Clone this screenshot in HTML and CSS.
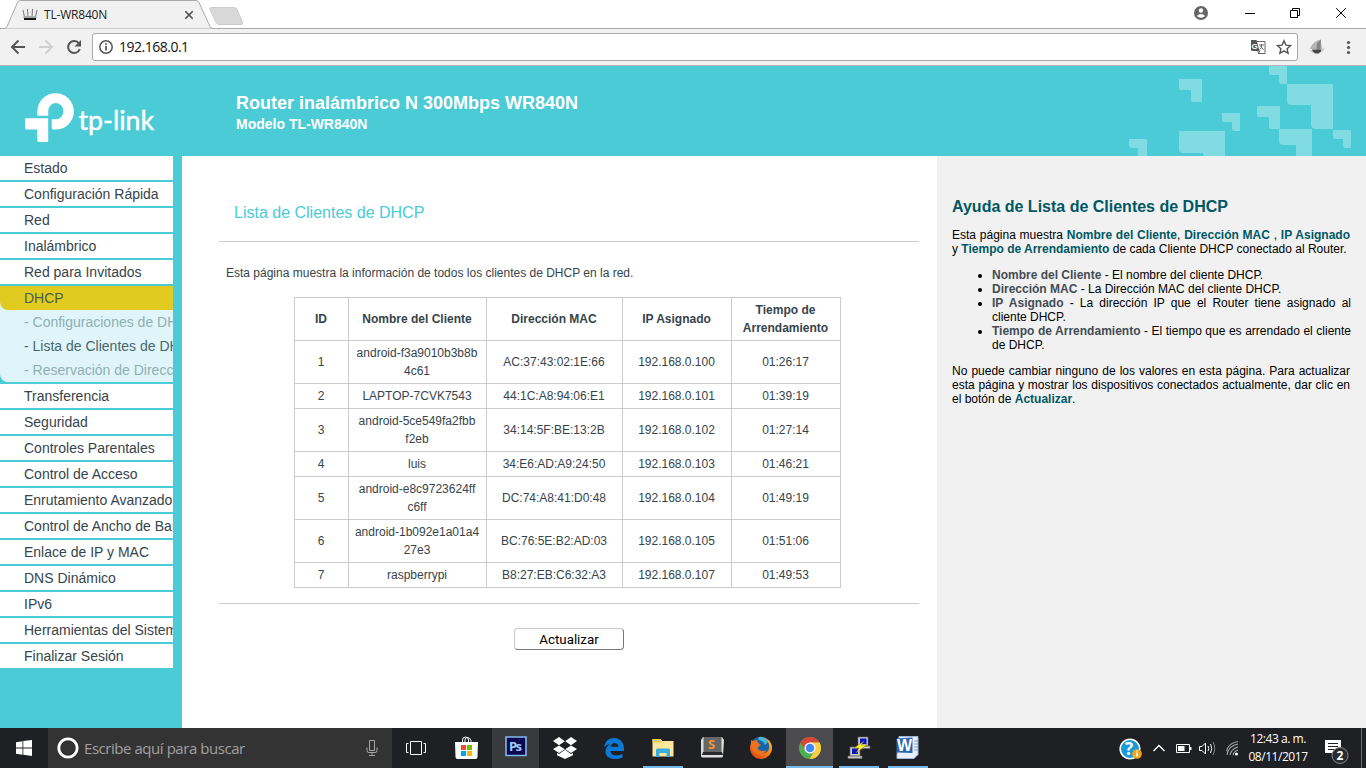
FILE: index.html
```html
<!DOCTYPE html>
<html lang="es">
<head>
<meta charset="utf-8">
<title>TL-WR840N</title>
<link rel="stylesheet" href="styles.css">
</head>
<body>
<div class="screen">
  <div class="tabstrip">
    <svg class="tab-shape" width="250" height="29" viewBox="0 0 250 29">
      <path d="M0 29V28.5H4Q6 28.5 7 26.500L17.500 2.500Q18.500 .5 20.500 .5H196Q198 .5 199 2.500L210 26.500Q211 28.500 213 28.500H250V29Z" fill="#f1f1f1" stroke="#a9a9a9"/>
      <path d="M212 7.500H234Q236 7.500 237 9.500L242.500 22Q243.500 24.500 241 24.500H219Q217 24.500 216 22.500L210 9.500Q209 7.500 212 7.500Z" fill="#d8d8d8" stroke="#cbcbcb"/>
    </svg>
    <div class="tab">
      <svg width="16" height="16" viewBox="0 0 16 16"><path fill="#eee" d="M0 0h16v16H0z"/><path d="M1 3l1.500 7M5.500 2l.5 8M10.500 2l-.5 8M15 3l-1.500 7" stroke="#777" fill="none"/><path d="M2 9h12l1 2H1z" fill="#aaa"/><path d="M2 11h12v2H2z" fill="#151515"/></svg>
      <span class="tab-title">TL-WR840N</span>
      <svg class="tab-close" width="10" height="10" viewBox="0 0 10 10"><path d="M1.300 1.300l7.400 7.400M8.700 1.300L1.300 8.700" stroke="#4d4d4d" stroke-width="1.600"/></svg>
    </div>
    <svg class="window-buttons" width="176" height="28" viewBox="0 0 176 28">
      <circle cx="11" cy="13" r="7" fill="#666"/><circle cx="11" cy="10.500" r="2.200" fill="#fff"/><path d="M6.800 16Q11 12 15.200 16Q11 19.500 6.800 16Z" fill="#fff"/>
      <path d="M55 13.500h10M100.500 10.500h7v7h-7zM102.500 10V8.500h7v7H108M146.200 8.200l9.600 9.600M155.800 8.200l-9.600 9.600" fill="none" stroke="#000"/>
    </svg>
  </div>
  <div class="toolbar">
    <svg width="92" height="36" viewBox="0 0 92 36">
      <path d="M25 18H12.500M18.500 11.500L12 18l6.500 6.500" fill="none" stroke="#555" stroke-width="2"/>
      <path d="M39 18h12.500M45.500 11.500L52 18l-6.500 6.500" fill="none" stroke="#d0d0d0" stroke-width="2"/>
      <path d="M79 14.500A6 6 0 1 0 79.800 20" fill="none" stroke="#555" stroke-width="2"/><path d="M81 11v6.500h-6.500z" fill="#555"/>
    </svg>
    <div class="omnibox">
      <svg width="14" height="14" viewBox="0 0 14 14"><circle cx="7" cy="7" r="6.200" fill="none" stroke="#555" stroke-width="1.500"/><path d="M6.200 6h1.700v4.500H6.200zM6.200 3.300h1.700v1.600H6.200z" fill="#555"/></svg>
      <span class="url">192.168.0.1</span>
      <svg class="omni-icons" width="44" height="20" viewBox="0 0 44 20">
        <path d="M7.500 4.500h8.500v12H9.500z" fill="#fff" stroke="#666"/><path d="M2 3h5.500l3 11H3.500Q2 14 2 12.500z" fill="#555"/><text x="2.600" y="11.500" class="g-mark">G</text><path d="M10 8h5M12.500 7v1q1 3-2 4.500M11.500 9l3 4M9.500 16.500l1.500-3" fill="none" stroke="#666"/>
        <path d="M35 3.800l1.900 4.300 4.700.5-3.500 3.100 1 4.600-4.100-2.400-4.100 2.400 1-4.600-3.500-3.100 4.700-.5z" fill="none" stroke="#555" stroke-width="1.400"/>
      </svg>
    </div>
    <svg class="extensions" width="68" height="36" viewBox="0 0 68 36">
      <path d="M13 17.500Q16 12 22.500 10.500L24 20H12z" fill="#b5b5b5"/><path d="M19 14l4-3.500-.5 10h-4z" fill="#858585"/><path d="M11 20.500q8 3 16-2-2 5-8 7-5-.5-8-5z" fill="#ccc"/><path d="M14 20.500h9q1 2-3 4-5 0-6-4z" fill="#444"/>
      <g fill="#555"><circle cx="50.500" cy="13.500" r="1.600"/><circle cx="50.500" cy="18.500" r="1.600"/><circle cx="50.500" cy="23.500" r="1.600"/></g>
    </svg>
  </div>

  <header class="banner">
    <svg class="brand" width="182" height="90" viewBox="0 0 182 90">
      <path d="M37.300 49.700V45.400A18.300 18.200 0 1 1 55.600 63.600H53.500Q51.700 63.600 51.700 61.800V53.300H55.800A7.600 8.200 0 1 0 48.300 45V49.700Z" fill="#fff"/>
      <path d="M25 52.300H48.200V76H39Q37.300 76 37.300 74.300V63.600H27Q25 63.600 25 61.600Z" fill="#fff"/>
      <text class="brand-name" x="78.500" y="64" textLength="75.500" lengthAdjust="spacingAndGlyphs">tp-link</text>
    </svg>
    <div class="titles"><h1>Router inalámbrico N 300Mbps WR840N</h1><h2>Modelo TL-WR840N</h2></div>
    <svg class="tiles" width="256" height="90" viewBox="0 0 256 90" fill="#81dbe2">
      <path d="M69 13h23v23h-9q-2 0-2-2v-10h-10q-2 0-2-2z"/>
      <path d="M159 0h18v18h-6q-2 0-2-2v-7h-8q-2 0-2-2z"/>
      <path d="M177 18h46v45h-17q-5 0-5-5v-19h-20q-4 0-4-4z"/>
      <path d="M147 40h23v23h-9q-2 0-2-2v-10h-10q-2 0-2-2z"/>
      <path d="M112 47h18v18h-6q-2 0-2-2v-7h-8q-2 0-2-2z"/>
      <path d="M169 63h33v27h-16v-11h-13q-4 0-4-4z"/>
      <path d="M223 64h18v18h-6q-2 0-2-2v-7h-8q-2 0-2-2z"/>
      <path d="M69 65h46v25h-20q-2 0-2-3h-20q-4 0-4-4z"/>
      <path d="M19 73h18v17h-9v-8h-7q-2 0-2-2z"/>
    </svg>
  </header>

  <div class="content">
    <nav class="menu">
      <a>Estado</a><a>Configuración Rápida</a><a>Red</a><a>Inalámbrico</a><a>Red para Invitados</a>
      <div class="menu-group">
        <a class="selected">DHCP</a>
        <a class="sub">- Configuraciones de DHCP</a><a class="sub current">- Lista de Clientes de DHCP</a><a class="sub">- Reservación de Direcciones</a>
      </div>
      <a>Transferencia</a><a>Seguridad</a><a>Controles Parentales</a><a>Control de Acceso</a><a>Enrutamiento Avanzado</a><a>Control de Ancho de Banda</a><a>Enlace de IP y MAC</a><a>DNS Dinámico</a><a>IPv6</a><a>Herramientas del Sistema</a><a>Finalizar Sesión</a>
    </nav>
    <main class="main">
      <h3>Lista de Clientes de DHCP</h3>
      <p class="intro">Esta página muestra la información de todos los clientes de DHCP en la red.</p>
      <table>
        <colgroup><col class="c-id"><col class="c-name"><col class="c-mac"><col class="c-ip"><col class="c-time"></colgroup>
        <tr><th>ID</th><th>Nombre del Cliente</th><th>Dirección MAC</th><th>IP Asignado</th><th>Tiempo de Arrendamiento</th></tr>
        <tr><td>1</td><td>android-f3a9010b3b8b<br>4c61</td><td>AC:37:43:02:1E:66</td><td>192.168.0.100</td><td>01:26:17</td></tr>
        <tr><td>2</td><td>LAPTOP-7CVK7543</td><td>44:1C:A8:94:06:E1</td><td>192.168.0.101</td><td>01:39:19</td></tr>
        <tr><td>3</td><td>android-5ce549fa2fbb<br>f2eb</td><td>34:14:5F:BE:13:2B</td><td>192.168.0.102</td><td>01:27:14</td></tr>
        <tr><td>4</td><td>luis</td><td>34:E6:AD:A9:24:50</td><td>192.168.0.103</td><td>01:46:21</td></tr>
        <tr><td>5</td><td>android-e8c9723624ff<br>c6ff</td><td>DC:74:A8:41:D0:48</td><td>192.168.0.104</td><td>01:49:19</td></tr>
        <tr><td>6</td><td>android-1b092e1a01a4<br>27e3</td><td>BC:76:5E:B2:AD:03</td><td>192.168.0.105</td><td>01:51:06</td></tr>
        <tr><td>7</td><td>raspberrypi</td><td>B8:27:EB:C6:32:A3</td><td>192.168.0.107</td><td>01:49:53</td></tr>
      </table>
      <div class="actions"><button>Actualizar</button></div>
    </main>
    <aside class="help">
      <h4>Ayuda de Lista de Clientes de DHCP</h4>
      <p>Esta página muestra <b>Nombre del Cliente</b>, <b>Dirección MAC</b> , <b>IP Asignado</b> y <b>Tiempo de Arrendamiento</b> de cada Cliente DHCP conectado al Router.</p>
      <ul>
        <li><b>Nombre del Cliente</b> - El nombre del cliente DHCP.</li>
        <li><b>Dirección MAC</b> - La Dirección MAC del cliente DHCP.</li>
        <li><b>IP Asignado</b> - La dirección IP que el Router tiene asignado al cliente DHCP.</li>
        <li><b>Tiempo de Arrendamiento</b> - El tiempo que es arrendado el cliente de DHCP.</li>
      </ul>
      <p>No puede cambiar ninguno de los valores en esta página. Para actualizar esta página y mostrar los dispositivos conectados actualmente, dar clic en el botón de <b>Actualizar</b>.</p>
    </aside>
  </div>

  <footer class="taskbar">
    <svg class="start" width="48" height="40" viewBox="0 0 48 40"><path d="M16 14.200l6.500-.9v6.200H16zM23.300 13.100L32 12v7.500h-8.700zM16 20.400h6.500v6.300l-6.500-.9zM23.300 20.400H32V28l-8.700-1.200z" fill="#fff"/></svg>
    <div class="search">
      <svg width="24" height="24" viewBox="0 0 24 24"><circle cx="12" cy="12" r="9.200" fill="none" stroke="#fff" stroke-width="2.800"/></svg>
      <span>Escribe aquí para buscar</span>
      <svg class="mic" width="12" height="18" viewBox="0 0 12 18"><path d="M3.500 1.500h5v10h-5zM1 8.500v3q0 2 2 2h6q2 0 2-2v-3M6 13.500v3M3 16.500h6" fill="none" stroke="#a5a5a5"/></svg>
    </div>
    <div class="apps">
      <svg viewBox="0 0 49 40"><path d="M18.500 13.500h11v13h-11zM16.500 15.500h-2v9h2M31.500 15.500h2v9h-2" fill="none" stroke="#fff"/></svg>
      <svg viewBox="0 0 49 40"><path d="M14 14h23l-.5 15q0 2-2 2h-18q-2 0-2-2z" fill="#fff"/><path d="M21.500 14v-2q0-3 3-3t3 3v2M24 14v-2q0-2.500 2.500-2.500T30 12.500V14" fill="none" stroke="#fff"/><path fill="#f25022" d="M20 17h5v5h-5z"/><path fill="#7fba00" d="M26 17h5v5h-5z"/><path fill="#00a4ef" d="M20 23h5v5h-5z"/><path fill="#ffb900" d="M26 23h5v5h-5z"/></svg>
      <svg class="hover" viewBox="0 0 49 40"><path d="M16 9h20v18.500H16z" fill="#0c0850" stroke="#7fb8ea" stroke-width="1.600"/><text class="ps" x="19" y="22.500" textLength="13">Ps</text></svg>
      <svg viewBox="0 0 49 40"><path d="M20 9l5.800 4.200L20 17.300 14 13zM32 9l6 4-6 4.300-5.800-4.100zM14 21l6-3.400 5.800 3.700L20 25zM38 21l-6-3.400-5.800 3.700L32 25zM18 25l2 1 6-4.200 6 4.200 2-1v2.200L26 31l-8-3.800z" fill="#fff"/></svg>
      <svg viewBox="0 0 49 40"><path d="M16 19.500C17 13 21 10 26 10c6 0 10 4.500 10 11v2H22.500c.3 5 7 5.500 12 2.800v3.900C25 33 17 30 17.500 23c.2-3 2-5.500 5-7-3 .5-5 1.500-6.500 3.500zM22.700 18.800h7.600c0-5-7-5-7.600 0z" fill="#0a78d4"/></svg>
      <svg class="open" viewBox="0 0 49 40"><path d="M15.500 11h8l1.500 2h11.500v15.500h-21z" fill="#ffe79b"/><path d="M15.500 11h8l1.500 2-1 1.500h-8.500z" fill="#f8cd4b"/><path d="M17 12.500h3" stroke="#7dc"/><path d="M19 29v-7q0-1.500 1.500-1.500h11q1.500 0 1.500 1.500v7h-3.500v-4h-7v4z" fill="#3aaee0"/></svg>
      <svg viewBox="0 0 49 40"><path d="M15 12l2-3h19l2 3-1 16q0 1.500-2 1.500H17q-2 0-2-1.500z" fill="#ddd"/><path d="M17.500 9h18v16h-18z" fill="#666"/><path d="M17 24h19l1 3H16z" fill="#292929"/><text class="sub-s" x="22" y="20.500">S</text></svg>
      <svg viewBox="0 0 49 40"><defs><linearGradient id="fox" x1="1" y1="0" x2="0" y2="1"><stop offset="0" stop-color="#ffd039"/><stop offset=".5" stop-color="#f47a17"/><stop offset="1" stop-color="#d83a16"/></linearGradient></defs><circle cx="26" cy="20" r="11" fill="url(#fox)"/><path d="M18 13q1-3 6-4 5-.5 8 3 4 6 1 11-5 5-11 1l3-1q-4-2-4-4l4-2-3-3z" fill="#1765a8"/><path d="M24 9q6-1 9 5l-3 3q-2-5-7-5z" fill="#48b4df"/><path d="M16 12l2 1 4-1 1 3 3 2-3 2q-1 4 5 4 3 0 4-1-4 6-10 4-5-2-6-8z" fill="#ee7219"/></svg>
      <svg class="active" viewBox="0 0 49 40"><circle cx="26" cy="20" r="11" fill="#4caf50"/><path d="M16.500 14.500A11 11 0 0 1 35.500 14.500H26L21.200 22.700z" fill="#dc4437"/><path d="M35.500 14.500A11 11 0 0 1 25.500 31L30.800 22.700 26 14.500z" fill="#ffcd40"/><circle cx="26" cy="20" r="5.600" fill="#fff"/><circle cx="26" cy="20" r="4.300" fill="#4286f4"/></svg>
      <svg class="open" viewBox="0 0 49 40"><g fill="#ccc" stroke="#666" stroke-width=".6"><path d="M25 9h10v9H25zM24 18h13v2.500H24zM17 19h10v9H17zM15 28h14v2.500H15z"/></g><path d="M27 10.500h6.500v5.500H27zM19 20.500h6v5.500h-6z" fill="#0b13c7"/><path d="M31 13l-10 7h5l-3 5 11-8h-6z" fill="#fff13b" stroke="#766b00" stroke-width=".5"/></svg>
      <svg class="open" viewBox="0 0 49 40"><path d="M17 8.500h19v18l-4 4H15v-4z" fill="#e8f0fb" stroke="#9bb5dc"/><path d="M14.500 10.500l16-1V25l-16-.5z" fill="#2a65af"/><path d="M32 13h4M32 16h4M32 19h4M32 22h4" stroke="#7ba2d8"/><text class="word-w" x="15" y="23" textLength="15" lengthAdjust="spacingAndGlyphs">W</text></svg>
    </div>
    <svg class="tray" width="130" height="40" viewBox="0 0 130 40">
      <circle cx="20" cy="21" r="9.800" fill="#169bd7" stroke="#fff" stroke-width="1.600"/><text class="question" x="15" y="27">?</text><circle cx="27" cy="26" r="4.800" fill="#f3a51e"/><path d="M27 24.500v4M27 22.500v1" stroke="#fff" stroke-width="1.600"/>
      <path d="M43.500 23l5.500-5.500 5.500 5.500" fill="none" stroke="#fff" stroke-width="1.300"/>
      <path d="M66.500 16.500h13v8h-13z" fill="none" stroke="#fff"/><path d="M68 18h6.500v5H68zM80 19h1.500v3H80z" fill="#fff"/>
      <path d="M89.500 18.500h2.500l3.500-3.500v11l-3.500-3.500h-2.500zM98 18q1.500 2.500 0 5M100.500 16q2.500 4.500 0 9" fill="none" stroke="#fff"/><path d="M103 14q3.500 6 0 13" fill="none" stroke="#888"/>
      <path d="M117 27q1-9 11-11M120 27q1-6 8-8M123 27q1-4 5-5M116.500 23q2-8 11.500-9.500" fill="none" stroke="#aaa" stroke-width="1.100"/><circle cx="126.500" cy="26" r="1.600" fill="#fff"/>
    </svg>
    <div class="clock"><span class="time">12:43 a. m.</span><span class="date">08/11/2017</span></div>
    <svg class="notice" width="50" height="40" viewBox="0 0 50 40"><path d="M9 12h16v13h-6l-3 3v-3H9z" fill="#fff"/><path d="M12 15.500h10M12 18.500h10M12 21.500h6" stroke="#222"/><circle cx="24" cy="27.500" r="8" fill="#292b2e" stroke="#85878a"/><text class="count" x="20.500" y="32">2</text><path d="M45.500 0v40" stroke="#6c6d70"/></svg>
  </footer>
</div>
</body>
</html>
```
FILE: styles.css
```css
* { box-sizing: border-box; }
body { margin: 0; font-family: "Liberation Sans", Arial, sans-serif; }
.screen { width: 1366px; height: 768px; display: flex; flex-direction: column; overflow: hidden; background: #fff; }
svg { display: block; flex: none; }

.tabstrip { position: relative; height: 29px; flex: none; display: flex; justify-content: space-between; border-bottom: 1px solid #a9a9a9; }
.tab-shape { position: absolute; left: 0; top: 0; }
.tab { position: relative; display: flex; align-items: center; height: 28px; padding: 2px 0 0 22px; width: 194px; }
.tab-title { font: 12px/16px "Open Sans", sans-serif; margin: -1px 0 0 6px; color: #222; letter-spacing: -.2px; }
.tab-close { margin-left: auto; }
.window-buttons { width: 176px; }

.toolbar { height: 37px; flex: none; display: flex; background: #f1f1f1; border-bottom: 1px solid #b5b5b5; }
.omnibox { width: 1206px; height: 28px; margin-top: 4px; padding: 0 4px 0 6px; display: flex; align-items: center; background: #fff; border: 1px solid #a8a8a8; border-radius: 3px; }
.url { font: 14px/18px "Open Sans", sans-serif; letter-spacing: -.5px; margin: -1px 0 0 6px; color: #111; }
.omni-icons { margin-left: auto; }
.g-mark { font: bold 8px "Liberation Sans", sans-serif; fill: #fff; }

.banner { height: 90px; flex: none; display: flex; background: #4acbd6; color: #fff; }
.brand-name { font: 26px Lato, sans-serif; fill: #fff; stroke: #fff; stroke-width: .5px; }
.titles { padding: 27px 0 0 54px; flex: 1; }
.titles h1 { margin: 0; font-size: 18px; line-height: 20px; }
.titles h2 { margin: 3px 0 0; font-size: 14px; line-height: 16px; }

.content { height: 572px; flex: none; display: flex; }
.menu { width: 182px; padding-right: 9px; background: #4acbd6; display: flex; flex-direction: column; gap: 2px; }
.menu a { display: block; height: 24px; flex: none; padding-left: 24px; font-size: 14px; line-height: 24px; color: #36444b; background: #fff; white-space: nowrap; overflow: hidden; }
.menu-group { background: #e0f5f9; border-bottom-left-radius: 8px; }
.menu .selected { background: #e2cb20; border-bottom-left-radius: 8px; color: #4c5d45; }
.menu .sub { background: transparent; color: #8eb0b5; }
.menu .current { color: #48666e; }

.main { width: 755px; padding: 46px 18px 0 37px; color: #36444b; }
.main h3 { margin: 0; padding: 0 0 17px 15px; font-size: 16px; font-weight: 400; line-height: 22px; color: #4acbd6; border-bottom: 1px solid #ccc; }
.intro { margin: 22px 0 0 7px; font-size: 12px; line-height: 18px; height: 33px; }
table { width: 547px; margin-left: 75px; border-collapse: collapse; table-layout: fixed; font-size: 12px; line-height: 18px; }
.c-id { width: 54px; }
.c-name { width: 138px; }
.c-mac { width: 136px; }
.c-ip, .c-time { width: 109px; }
td, th { border: 1px solid #ccc; padding: 3px 4px 3px 3px; text-align: center; vertical-align: middle; }
.actions { margin-top: 15px; padding-top: 24px; border-top: 1px solid #ccc; display: flex; justify-content: center; }
button { width: 110px; height: 22px; padding: 0; font: 13.333px Roboto, sans-serif; color: #000; background: #fff; border: 1px solid; border-color: #c9c9c9 #777 #777 #c9c9c9; border-radius: 4px; }

.help { flex: 1; padding: 41px 16px 0 15px; background: #f1f1f1; color: #000; font-size: 12px; line-height: 14px; text-align: justify; }
.help h4 { margin: 0 0 12px; font-size: 16px; line-height: 19px; color: #005864; white-space: nowrap; }
.help p { margin: 0; }
.help p b { color: #005864; }
.help ul { margin: 12px -1px 12px 0; padding-left: 40px; }
.help li b { color: #434c54; }

.taskbar { height: 40px; flex: none; display: flex; background: #1e2023; color: #fff; }
.search { width: 344px; display: flex; align-items: center; padding: 0 14px 0 8px; background: #333; }
.search span { margin-left: 4px; font: 15px "Open Sans", sans-serif; letter-spacing: -.45px; color: #a0a0a0; }
.mic { margin-left: auto; }
.apps { display: flex; flex: none; }
.apps svg { width: 49px; height: 40px; }
.hover { background: linear-gradient(90deg, transparent 2px, #393a3c 2px); }
.open { background: linear-gradient(#76b9ed, #76b9ed) 6px 38px / 40px 2px no-repeat; }
.apps .active { background: linear-gradient(#76b9ed, #76b9ed) 2px 38px / 48px 2px no-repeat, linear-gradient(90deg, transparent 2px, #4b4b4d 2px); }
.ps { font: bold 13px "Open Sans", sans-serif; fill: #9bd0f5; }
.sub-s { font: bold 13px "Open Sans", sans-serif; fill: #f79433; }
.word-w { font: bold 17px "Liberation Sans", sans-serif; fill: #fff; }
.tray { margin-left: auto; }
.question { font: bold 17px "Open Sans", sans-serif; fill: #fff; }
.clock { width: 76px; display: flex; flex-direction: column; align-items: center; padding-top: 2px; font: 12px/18px "Open Sans", sans-serif; letter-spacing: -.45px; }
.clock span { white-space: nowrap; }
.notice { width: 50px; }
.count { font: bold 12px "Open Sans", sans-serif; fill: #fff; }
```
